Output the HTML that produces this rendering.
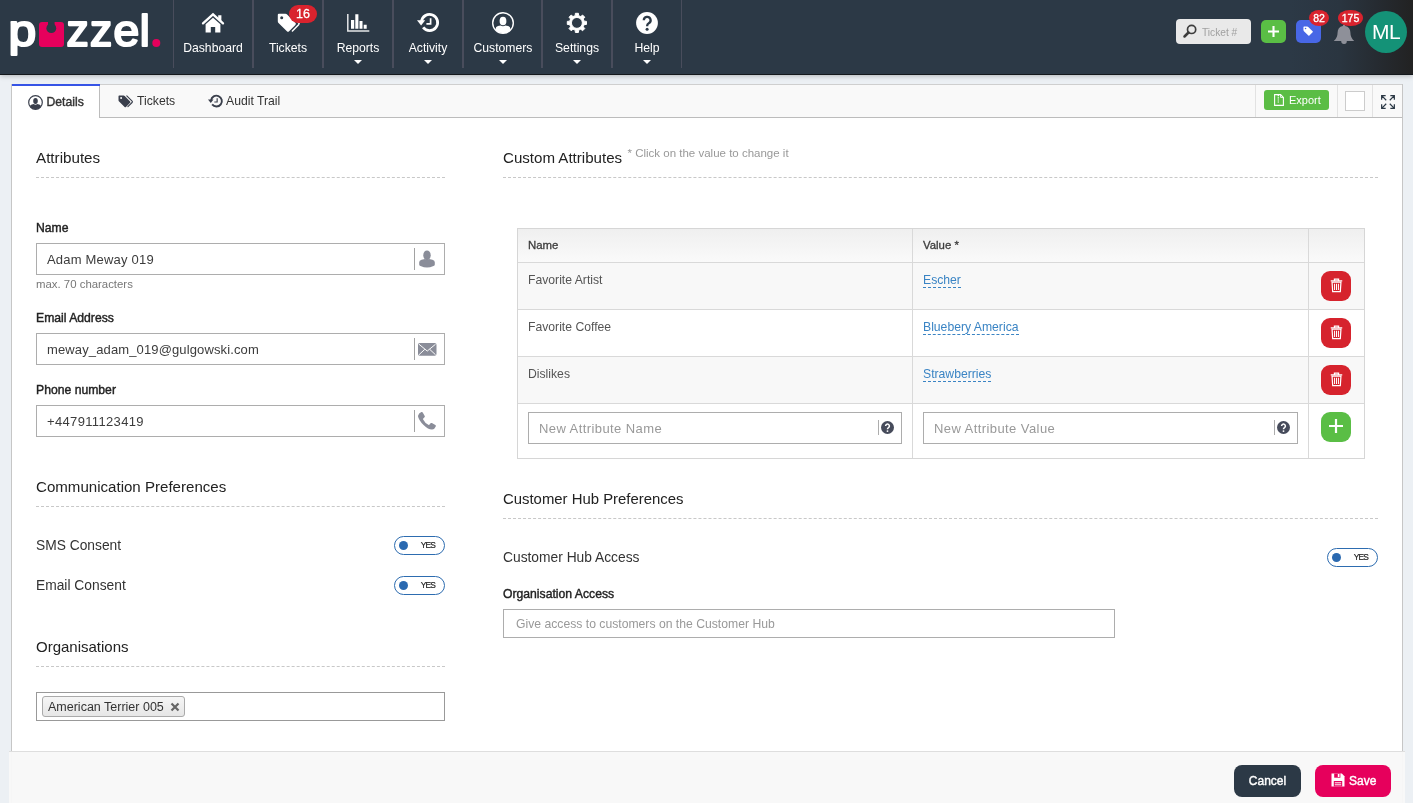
<!DOCTYPE html>
<html lang="en">
<head>
<meta charset="utf-8">
<title>Customer Details</title>
<style>
*{box-sizing:border-box;margin:0;padding:0}
html,body{width:1413px;height:803px;overflow:hidden}
body{position:relative;background:#ecf0f4;font-family:"Liberation Sans",Arial,sans-serif;font-size:12.2px;color:#333}
#wrap{position:absolute;left:0;top:0;width:1413px;height:803px;overflow:hidden;will-change:transform}
svg{display:block;overflow:visible}
.sb{-webkit-text-stroke:.4px currentColor}
.sb3{-webkit-text-stroke:.3px currentColor}
/* ---------- header ---------- */
#hdr{position:absolute;left:0;top:0;width:1413px;height:75px;background:linear-gradient(90deg,#2c3946 0,#2c3946 1290px,#2a3540 1340px,#25292e 1385px,#222 1413px);border-bottom:1px solid #14181c;box-shadow:0 1px 5px rgba(0,0,0,.25)}
#logo{position:absolute;left:0;top:0}
.sep{position:absolute;top:0;width:1px;height:68px;background:#494d5c}
.nav{position:absolute;top:0;height:68px;color:#fff;text-align:center;font-size:12.2px}
.nav .lbl{position:absolute;left:0;right:0;top:41px;line-height:15px;white-space:nowrap}
.nav svg{position:absolute}
.caret{position:absolute;left:50%;top:59.5px;margin-left:-4px;width:0;height:0;border:4px solid transparent;border-top:4px solid #fff;border-bottom:0}
.badge{position:absolute;background:#d9232e;color:#fff;text-align:center;white-space:nowrap}
#search{position:absolute;left:1176px;top:19px;width:75px;height:25px;border-radius:4px;background:#e9e9e9;color:#a0a0a0;font-size:10.2px;line-height:27px;padding-left:26px}
#search svg{position:absolute;left:7px;top:5px}
.hbtn{position:absolute;top:20px;width:25px;height:23px;border-radius:5px}
#avatar{position:absolute;left:1365px;top:11px;width:42px;height:42px;border-radius:50%;background:#149277;color:#fff;font-size:21px;line-height:42px;text-align:center;letter-spacing:-.6px}
/* ---------- panel ---------- */
#panel{position:absolute;left:11px;top:84px;width:1392px;height:719px;background:#fff;border-left:1px solid #c6c6c6;border-right:1px solid #c6c6c6}
#tabbar{position:absolute;left:0;top:0;width:1390px;height:34px;background:#f9f9f9;border-top:1px solid #cfcfcf;border-bottom:1px solid #bcbcbc}
.tab{position:absolute;top:0;height:33px;color:#333;white-space:nowrap}
.tab svg{position:absolute}
.tab span{position:absolute;line-height:14px}
#tab1{position:absolute;left:-1px;top:-1px;width:89px;height:34px;background:#fff;border-left:1px solid #c6c6c6;border-right:1px solid #bcbcbc}
#tab1 i{position:absolute;left:0;top:0;right:-1px;height:2px;background:#3654e6}
.vdiv{position:absolute;top:0;width:1px;height:32px;background:#e2e2e2}
#export{position:absolute;left:1252px;top:5px;width:65px;height:20px;border-radius:3px;background:#5bbd45;color:#fff;font-size:11px;line-height:20px;padding-left:25px}
#export svg{position:absolute;left:10px;top:4px}
#chk{position:absolute;left:1333px;top:6px;width:20px;height:20px;border:1px solid #ccc;background:#fff}
#footer{position:absolute;left:9px;top:751px;width:1396px;height:52px;background:rgba(248,248,248,.96);border-top:1px solid #dedede}
.btn{position:absolute;top:13px;height:32px;border-radius:8px;color:#fff;font-size:12px;line-height:32px;white-space:nowrap}
h3{position:absolute;font-size:15px;font-weight:400;color:#222;line-height:18px;white-space:nowrap}
.dash{position:absolute;height:0;border-top:1px dashed #c8c8c8}
.flabel{position:absolute;font-size:12.2px;color:#222;line-height:14px;white-space:nowrap}
.field{position:absolute;height:32px;border:1px solid #adadad;background:#fff;font-size:13px;color:#3c3c3c;line-height:32px;padding-left:10px;white-space:nowrap;letter-spacing:.2px}
.field .isep{position:absolute;top:4px;width:1px;height:22px;background:#a2a2a2}
.field svg{position:absolute}
.ph{color:#999}
.note{position:absolute;font-size:11.4px;color:#777;line-height:13px;white-space:nowrap}
.row{position:absolute;font-size:13.8px;color:#333;line-height:18px;white-space:nowrap}
.tog{position:absolute;width:51px;height:19px;border:1px solid #2d6cb0;border-radius:10px;background:#fff;font-size:8.4px;color:#222;line-height:17px;letter-spacing:-.75px;-webkit-text-stroke:.2px currentColor}
.tog i{position:absolute;left:4px;top:4px;width:9px;height:9px;border-radius:50%;background:#2a69b0}
.tog span{position:absolute;left:25.7px;top:0}
/* table */
#tbl{position:absolute;left:505px;top:144px;width:848px;height:231px;border:1px solid #d6d6d6;background:#fff}
#tbl .hr{position:absolute;left:0;width:846px;height:1px;background:#d9d9d9}
#tbl .vr{position:absolute;top:0;width:1px;height:229px;background:#d9d9d9}
#tbl .bg{position:absolute;left:0;width:846px}
#tbl .th{position:absolute;top:9.200px;font-size:11.4px;color:#3c3c3c;-webkit-text-stroke:.3px currentColor;line-height:14px;white-space:nowrap}
#tbl .td{position:absolute;font-size:12.2px;color:#555;line-height:14px;white-space:nowrap}
#tbl .lnk{color:#3a84c4;border-bottom:1px dashed #3a84c4;height:15px}
.rbtn{position:absolute;left:803px;width:30px;height:30px;border-radius:9px;background:#d6232d}
.rbtn svg{position:absolute;left:8.500px;top:6.800px}
</style>
</head>
<body>
<div id="wrap">
<div id="hdr">
  <svg id="logo" width="170" height="74" viewBox="0 0 170 74" role="img" aria-label="puzzel.">
    <title>puzzel.</title>
    <text font-family="'Liberation Sans',Arial,sans-serif" font-weight="400" font-size="44.5" fill="#fff" stroke="#fff" stroke-width="2.2" stroke-linejoin="round" stroke-linecap="round" y="45.700"><tspan x="8.5" textLength="27.700" lengthAdjust="spacingAndGlyphs">p</tspan><tspan x="42.500" textLength="18" lengthAdjust="spacingAndGlyphs" font-size="36" stroke-width="1" fill="#e6005c" stroke="#e6005c">u</tspan><tspan x="66.600" textLength="22.200" lengthAdjust="spacingAndGlyphs">z</tspan><tspan x="90" textLength="22.200" lengthAdjust="spacingAndGlyphs">z</tspan><tspan x="113.400" textLength="25.800" lengthAdjust="spacingAndGlyphs">e</tspan><tspan x="139.800" textLength="10" lengthAdjust="spacingAndGlyphs">l</tspan><tspan x="153.300" y="45" textLength="6" lengthAdjust="spacingAndGlyphs" font-size="36" stroke-width="1" fill="#e6005c" stroke="#e6005c">.</tspan></text>
    <rect x="39" y="22" width="25" height="25" rx="3" fill="#e6005c"/>
    <rect x="48" y="21" width="6.600" height="6" fill="#2c3946"/>
    <circle cx="51.3" cy="28.2" r="4.9" fill="#2c3946"/>
    <circle cx="156.3" cy="43" r="4" fill="#e6005c"/>
  </svg>

  <div class="sep" style="left:173px;width:1px"></div>
  <div class="sep" style="left:252px;width:2px"></div>
  <div class="sep" style="left:322px;width:2px"></div>
  <div class="sep" style="left:392px;width:2px"></div>
  <div class="sep" style="left:462px;width:2px"></div>
  <div class="sep" style="left:541px;width:2px"></div>
  <div class="sep" style="left:611px;width:2px"></div>
  <div class="sep" style="left:681px;width:1px"></div>
  <div class="nav" style="left:173px;width:80px">
    <svg style="left:29px;top:13px" width="22" height="20" viewBox="0 0 22 20"><path d="M1 10.4L11 1.4l10 9" fill="none" stroke="#fff" stroke-width="2.3" stroke-linecap="round" stroke-linejoin="miter"/><path d="M16.200 2.300h3.200v6l-3.200-2.900z" fill="#fff"/><path d="M3.600 11.200L11 4.700l7.400 6.500v8.300h-5.200v-5.600H8.800v5.600H3.600z" fill="#fff"/></svg>
    <div class="lbl">Dashboard</div>
  </div>
  <div class="nav" style="left:253px;width:70px">
    <svg style="left:23.500px;top:13px" width="23" height="20" viewBox="0 0 23 20"><path d="M13.200 1.200l8.400 8.400a1.600 1.600 0 0 1 0 2.200l-6.200 6.200" fill="none" stroke="#fff" stroke-width="1.500" stroke-linecap="round"/><path d="M1.800.8h6.600q1 0 1.700.7l8.300 8.300a1.600 1.600 0 0 1 0 2.200l-6.300 6.300a1.600 1.600 0 0 1-2.200 0L1.500 10Q.8 9.300.8 8.300V1.800a1 1 0 0 1 1-1z" fill="#fff"/><circle cx="4.700" cy="4.700" r="1.500" fill="#2c3946"/></svg>
    <div class="badge sb3" style="left:36px;top:5px;width:28px;height:18px;border-radius:9px;font-size:12.500px;line-height:18px">16</div>
    <div class="lbl">Tickets</div>
  </div>
  <div class="nav" style="left:323px;width:70px">
    <svg style="left:23.500px;top:14.200px" width="23" height="18" viewBox="0 0 23 18"><path d="M.8 0v17.100h21.500" fill="none" stroke="#e4e6e8" stroke-width="1.500"/><path d="M4 6h3.200v8.800H4zM8.300.2h3.100v14.600H8.300zM12.500 7h3v7.800h-3zM16.700 10.800h3v4h-3z" fill="#fff"/></svg>
    <div class="lbl">Reports</div><i class="caret"></i>
  </div>
  <div class="nav" style="left:393px;width:70px">
    <svg style="left:23.700px;top:12px" width="22" height="21" viewBox="0 0 22 21"><path d="M4.500 9.600A8.100 8.100 0 1 1 6.130 15.470" fill="none" stroke="#fff" stroke-width="2.800" stroke-linecap="butt"/><path d="M0 8.200h8.200L4.100 13.400z" fill="#fff"/><path d="M13.600 6.200v5.600H9.400" fill="none" stroke="#fff" stroke-width="1.700"/></svg>
    <div class="lbl">Activity</div><i class="caret"></i>
  </div>
  <div class="nav" style="left:463px;width:80px">
    <svg style="left:29px;top:12px" width="22" height="22" viewBox="0 0 22 22"><defs><clipPath id="cc"><circle cx="11" cy="11" r="10.200"/></clipPath></defs><circle cx="11" cy="11" r="10.300" fill="none" stroke="#fff" stroke-width="1.400"/><ellipse cx="11" cy="9" rx="3.400" ry="4.300" fill="#fff"/><path d="M3.600 22v-4.800q0-2.600 2.400-3.100l2.600-.6q2.400 1.500 4.800 0l2.600.6q2.400.5 2.400 3.100V22z" fill="#fff" clip-path="url(#cc)"/></svg>
    <div class="lbl">Customers</div><i class="caret"></i>
  </div>
  <div class="nav" style="left:542px;width:70px">
    <svg style="left:24.100px;top:12.200px" width="21.800" height="21.800" viewBox="0 0 22 22"><path fill-rule="evenodd" fill="#fff" stroke="#fff" stroke-width="1" stroke-linejoin="round" d="M9.25 3.71 L9.47 1.32 L12.53 1.32 L12.75 3.71 L14.92 4.61 L16.76 3.07 L18.93 5.24 L17.39 7.08 L18.29 9.25 L20.68 9.47 L20.68 12.53 L18.29 12.75 L17.39 14.92 L18.93 16.76 L16.76 18.93 L14.92 17.39 L12.75 18.29 L12.53 20.68 L9.47 20.68 L9.25 18.29 L7.08 17.39 L5.24 18.93 L3.07 16.76 L4.61 14.92 L3.71 12.75 L1.32 12.53 L1.32 9.47 L3.71 9.25 L4.61 7.08 L3.07 5.24 L5.24 3.07 L7.08 4.61Z M5.50 11.00 a5.5 5.5 0 1 0 11.0 0 a5.5 5.5 0 1 0 -11.0 0Z"/></svg>
    <div class="lbl">Settings</div><i class="caret"></i>
  </div>
  <div class="nav" style="left:612px;width:70px">
    <svg style="left:24.200px;top:12.100px" width="22" height="22" viewBox="0 0 22 22"><circle cx="11" cy="11" r="10.900" fill="#fff"/><path d="M7.800 8.300a3.400 3.400 0 1 1 5 3q-1.600.9-1.600 2.300v.6" fill="none" stroke="#2c3946" stroke-width="2.300"/><circle cx="11.100" cy="17.200" r="1.500" fill="#2c3946"/></svg>
    <div class="lbl">Help</div><i class="caret"></i>
  </div>

  <div id="search"><svg width="14" height="14" viewBox="0 0 14 14"><circle cx="8.600" cy="5.400" r="4.100" fill="none" stroke="#3d3d3d" stroke-width="1.700"/><path d="M5.500 8.500L1.500 12.500" stroke="#3d3d3d" stroke-width="2.500" stroke-linecap="round"/></svg>Ticket #</div>
  <div class="hbtn" style="left:1261px;background:#5abe45"><svg style="margin:6px 0 0 7px" width="11" height="11" viewBox="0 0 11 11"><path d="M5.500 0v11M0 5.500h11" stroke="#fff" stroke-width="2.100" stroke-linecap="butt"/></svg></div>
  <div class="hbtn" style="left:1296px;background:#4867e6"><svg style="margin:6px 0 0 7px" width="10.500" height="10.500" viewBox="0 0 12 12"><path d="M.5 1.300q0-.8.800-.8h3.500q.7 0 1.200.5l5 5q.6.600 0 1.200L7.300 10.900q-.6.600-1.200 0l-5-5Q.5 5.400.5 4.700z" fill="#fff"/><circle cx="2.900" cy="2.900" r=".9" fill="#4867e6"/></svg></div>
  <svg style="position:absolute;left:1333px;top:24px" width="22" height="22" viewBox="0 0 22 22"><path d="M11 .8q1.100 0 1.200 1.100 5.200 1.100 5.200 6.700 0 5.300 3.800 8.400H.8Q4.600 13.900 4.600 8.600q0-5.600 5.200-6.700.1-1.100 1.200-1.100z" fill="#8e9099"/><path d="M8.200 16.900h5.600a2.800 2.800 0 0 1-5.600 .4z" fill="#8e9099"/></svg>
  <div class="badge sb3" style="left:1309px;top:10px;width:20px;height:16px;border-radius:10px/8px;font-size:10.500px;line-height:16px">82</div>
  <div class="badge sb3" style="left:1338px;top:10px;width:25px;height:16px;border-radius:12px/8px;font-size:10.500px;line-height:16px">175</div>
  <div id="avatar">ML</div>
</div>
<div id="panel">
  <div id="tabbar">
    <div id="tab1"><i></i></div>
    <div class="tab" style="left:0">
      <svg style="left:16px;top:9.500px" width="15" height="15" viewBox="0 0 15 15"><defs><clipPath id="c2"><circle cx="7.500" cy="7.500" r="6.800"/></clipPath></defs><circle cx="7.500" cy="7.500" r="6.800" fill="none" stroke="#3a3f4c" stroke-width="1.200"/><ellipse cx="7.500" cy="6" rx="2.300" ry="2.900" fill="#3a3f4c"/><path d="M2 15v-3.500q0-1.700 1.800-2l2-.4q1.700 1.100 3.400 0l2 .4q1.800.3 1.800 2V15z" fill="#3a3f4c" clip-path="url(#c2)"/></svg>
      <span class="sb" style="left:34.500px;top:10.400px">Details</span>
    </div>
    <div class="tab" style="left:0">
      <svg style="left:106px;top:10px" width="15" height="13" viewBox="0 0 15 13"><path d="M8.800 .8l5.300 5.300a1 1 0 0 1 0 1.400l-4.200 4.200" fill="none" stroke="#3a3f4c" stroke-width="1.100" stroke-linecap="round"/><path d="M1.200.5h4.400q.7 0 1.100.5l5.400 5.400a1 1 0 0 1 0 1.400L8 11.900a1 1 0 0 1-1.400 0L1.100 6.500Q.5 6 .5 5.300V1.200a.7.700 0 0 1 .7-.7z" fill="#3a3f4c"/><circle cx="3.100" cy="3.100" r="1" fill="#f9f9f9"/></svg>
      <span style="left:125px;top:9px">Tickets</span>
    </div>
    <div class="tab" style="left:0">
      <svg style="left:195.800px;top:9.200px" width="14.800" height="14.200" viewBox="0 0 22 21"><path d="M4.500 9.600A8.100 8.100 0 1 1 6.130 15.470" fill="none" stroke="#3a3f4c" stroke-width="2.800" stroke-linecap="butt"/><path d="M0 8.200h8.200L4.100 13.400z" fill="#3a3f4c"/><path d="M13.600 6.200v5.600H9.400" fill="none" stroke="#3a3f4c" stroke-width="1.700"/></svg>
      <span style="left:214px;top:9px">Audit Trail</span>
    </div>
    <div class="vdiv" style="left:1243px"></div>
    <div class="vdiv" style="left:1325px"></div>
    <div class="vdiv" style="left:1360px"></div>
    <div id="export"><svg width="10" height="12" viewBox="0 0 10 12"><path d="M.6.600h6l2.800 2.800v8H.6z" fill="none" stroke="#fff" stroke-width="1.100"/><path d="M4.300 1v7.500" stroke="#fff" stroke-width="1.300" stroke-dasharray="1.200 1"/><path d="M6.600.6v2.800h2.800" fill="none" stroke="#fff" stroke-width=".9"/></svg>Export</div>
    <div id="chk"></div>
    <svg style="position:absolute;left:1369px;top:10px" width="14" height="14" viewBox="0 0 15 15"><g fill="none" stroke="#2c3946" stroke-width="1.300"><path d="M.7 5V.7H5M1 1l4.600 4.600"/><path d="M10 .7h4.300V5M14 1L9.400 5.600"/><path d="M.7 10v4.300H5M1 14l4.600-4.600"/><path d="M10 14.300h4.300V10M14 14L9.400 9.400"/></g></svg>
  </div>

  <!-- left column : x offset = abs - 12 ; y offset = abs - 84 -->
  <h3 style="left:24px;top:65px;font-size:15.200px">Attributes</h3>
  <div class="dash" style="left:24px;top:93px;width:409px"></div>

  <div class="flabel sb" style="left:24px;top:137px">Name</div>
  <div class="field" style="left:24px;top:159px;width:409px">Adam Meway 019<i class="isep" style="left:377px"></i><svg style="left:382px;top:6px" width="16" height="18" viewBox="0 0 16 18"><ellipse cx="8" cy="5.300" rx="3.700" ry="4.900" fill="#8a8d99"/><path d="M.2 12.300Q.2 10.200 2.500 9.700L6 9q2 1.400 4 0l3.500.7q2.300.5 2.300 2.600v2.200q0 1.100-1.300 1.600Q11 17.600 8 17.600T1.500 16.100Q.2 15.600.2 14.500z" fill="#8a8d99"/></svg></div>
  <div class="note" style="left:24px;top:194px">max. 70 characters</div>

  <div class="flabel sb" style="left:24px;top:227px">Email Address</div>
  <div class="field" style="left:24px;top:249px;width:409px;letter-spacing:.130px">meway_adam_019@gulgowski.com<i class="isep" style="left:377px"></i><svg style="left:381px;top:8.500px" width="18.500" height="12.800" viewBox="0 0 19 13"><rect width="19" height="13" rx="1.800" fill="#8a8d99"/><path d="M1 1.200l8.500 7 8.500-7M1 12l6-5.600M18 12l-6-5.600" fill="none" stroke="#fff" stroke-width="1"/></svg></div>

  <div class="flabel sb" style="left:24px;top:299px">Phone number</div>
  <div class="field" style="left:24px;top:321px;width:409px;letter-spacing:.340px">+447911123419<i class="isep" style="left:377px"></i><svg style="left:380.300px;top:4.500px" width="19.800" height="19.800" viewBox="0 0 19 19"><path d="M4.200 1q.8-.4 1.300.4l1.900 3.300q.4.700-.2 1.300L6 7.200q-.4.400-.1 1 1.700 3.400 5 5.100.5.300.9-.2l1.200-1.300q.5-.6 1.300-.200l3.300 1.900q.8.500.4 1.300-.9 2.400-3.500 3Q11 18 6.300 13.400T.9 4.700Q1.600 2 4.200 1z" fill="#8a8d99"/></svg></div>

  <h3 style="left:24px;top:394px;font-size:15.080px">Communication Preferences</h3>
  <div class="dash" style="left:24px;top:422px;width:409px"></div>
  <div class="row" style="left:24px;top:453px">SMS Consent</div>
  <div class="tog" style="left:382px;top:452px"><i></i><span>YES</span></div>
  <div class="row" style="left:24px;top:493px">Email Consent</div>
  <div class="tog" style="left:382px;top:492px"><i></i><span>YES</span></div>

  <h3 style="left:24px;top:554px">Organisations</h3>
  <div class="dash" style="left:24px;top:582px;width:409px"></div>
  <div style="position:absolute;left:24px;top:608px;width:409px;height:29px;border:1px solid #999;background:#fff">
    <div style="position:absolute;left:5px;top:3px;width:143px;height:21px;border:1px solid #aaa;border-radius:3px;background:linear-gradient(#f6f6f6,#e6e6e6);font-size:12.500px;line-height:21px;color:#333;padding-left:5px;white-space:nowrap">American Terrier 005<svg style="position:absolute;left:127px;top:5px" width="10" height="10" viewBox="0 0 10 10"><path d="M1.500 1.500l7 7M8.500 1.500l-7 7" stroke="#666" stroke-width="2.200"/></svg></div>
  </div>

  <!-- right column -->
  <h3 style="left:491px;top:65px;font-size:15.100px">Custom Attributes</h3>
  <div class="note" style="left:615.500px;top:63px;color:#999;font-size:11.500px">* Click on the value to change it</div>
  <div class="dash" style="left:491px;top:93px;width:875px"></div>

  <div id="tbl">
    <div class="bg" style="top:0;height:33px;background:linear-gradient(#efefef,#fafafa)"></div>
    <div class="bg" style="top:34px;height:46px;background:#f8f8f8"></div>
    <div class="bg" style="top:128px;height:46px;background:#f8f8f8"></div>
    <div class="hr" style="top:33px"></div>
    <div class="hr" style="top:80px"></div>
    <div class="hr" style="top:127px"></div>
    <div class="hr" style="top:174px"></div>
    <div class="vr" style="left:394px"></div>
    <div class="vr" style="left:790px"></div>
    <div class="th" style="left:10px">Name</div>
    <div class="th" style="left:405px">Value *</div>
    <div class="td" style="left:10px;top:44px">Favorite Artist</div>
    <div class="td lnk" style="left:405px;top:44px">Escher</div>
    <div class="td" style="left:10px;top:91px">Favorite Coffee</div>
    <div class="td lnk" style="left:405px;top:91px">Bluebery America</div>
    <div class="td" style="left:10px;top:138px">Dislikes</div>
    <div class="td lnk" style="left:405px;top:138px">Strawberries</div>
    <div class="rbtn" style="top:42px"><svg width="13" height="14.400" viewBox="0 0 14 16" preserveAspectRatio="none"><path d="M.8 3.300h12.400M4.800 3V1.200h4.400V3" fill="none" stroke="#fff" stroke-width="1.400"/><path d="M2.200 4.600h9.600l-.7 10.600H2.900z" fill="none" stroke="#fff" stroke-width="1.300"/><path d="M4.900 6.500v6.800M7 6.500v6.800M9.100 6.500v6.800" stroke="#fff" stroke-width="1.100"/></svg></div>
    <div class="rbtn" style="top:89px"><svg width="13" height="14.400" viewBox="0 0 14 16" preserveAspectRatio="none"><path d="M.8 3.300h12.400M4.800 3V1.200h4.400V3" fill="none" stroke="#fff" stroke-width="1.400"/><path d="M2.200 4.600h9.600l-.7 10.600H2.900z" fill="none" stroke="#fff" stroke-width="1.300"/><path d="M4.900 6.500v6.800M7 6.500v6.800M9.100 6.500v6.800" stroke="#fff" stroke-width="1.100"/></svg></div>
    <div class="rbtn" style="top:136px"><svg width="13" height="14.400" viewBox="0 0 14 16" preserveAspectRatio="none"><path d="M.8 3.300h12.400M4.800 3V1.200h4.400V3" fill="none" stroke="#fff" stroke-width="1.400"/><path d="M2.200 4.600h9.600l-.7 10.600H2.900z" fill="none" stroke="#fff" stroke-width="1.300"/><path d="M4.900 6.500v6.800M7 6.500v6.800M9.100 6.500v6.800" stroke="#fff" stroke-width="1.100"/></svg></div>
    <div class="rbtn" style="top:183px;background:#5abe45"><svg style="left:7px;top:6px" width="16" height="16" viewBox="0 0 16 16"><path d="M8 1v14M1 8h14" stroke="#fff" stroke-width="2.200"/></svg></div>
    <div class="field ph" style="left:10px;top:183px;width:374px;letter-spacing:.42px">New Attribute Name<i class="isep" style="left:349px;height:15px;top:7px;background:#adadad"></i><svg style="left:352px;top:8px" width="13" height="13" viewBox="0 0 13 13"><circle cx="6.500" cy="6.500" r="6.500" fill="#464b5b"/><path d="M4.600 5a1.900 1.900 0 1 1 2.900 1.600q-1 .6-1 1.400v.3" fill="none" stroke="#fff" stroke-width="1.500"/><circle cx="6.500" cy="10.100" r=".95" fill="#fff"/></svg></div>
    <div class="field ph" style="left:405px;top:183px;width:375px;letter-spacing:.42px">New Attribute Value<i class="isep" style="left:350px;height:15px;top:7px;background:#adadad"></i><svg style="left:353px;top:8px" width="13" height="13" viewBox="0 0 13 13"><circle cx="6.500" cy="6.500" r="6.500" fill="#464b5b"/><path d="M4.600 5a1.900 1.900 0 1 1 2.900 1.600q-1 .6-1 1.400v.3" fill="none" stroke="#fff" stroke-width="1.500"/><circle cx="6.500" cy="10.100" r=".95" fill="#fff"/></svg></div>
  </div>

  <h3 style="left:491px;top:406px;font-size:14.900px">Customer Hub Preferences</h3>
  <div class="dash" style="left:491px;top:434px;width:875px"></div>
  <div class="row" style="left:491px;top:465px">Customer Hub Access</div>
  <div class="tog" style="left:1315px;top:464px"><i></i><span>YES</span></div>
  <div class="flabel sb" style="left:491px;top:503px">Organisation Access</div>
  <div class="field ph" style="left:491px;top:525px;width:612px;height:29px;line-height:28px;font-size:12.200px;letter-spacing:0;padding-left:12px">Give access to customers on the Customer Hub</div>
</div>
<div id="footer">
  <div class="btn sb" style="left:1225px;width:67px;background:#2c3946;text-align:center">Cancel</div>
  <div class="btn sb" style="left:1306px;width:76px;background:#e6005c;padding-left:34px"><svg style="position:absolute;left:16px;top:8px" width="14" height="14" viewBox="0 0 14 14"><path d="M.5.500h10.300l2.700 2.700v10.300H.5z" fill="#fff"/><rect x="3.200" y=".5" width="6.200" height="4.200" fill="#e6005c"/><rect x="6.800" y="1" width="1.700" height="3" fill="#fff"/><rect x="2.800" y="8" width="8.400" height="5.500" fill="#e6005c"/><path d="M3.800 9.800h6.400M3.800 11.800h6.400" stroke="#fff" stroke-width="1"/></svg>Save</div>
</div>
</div>
</body>
</html>
